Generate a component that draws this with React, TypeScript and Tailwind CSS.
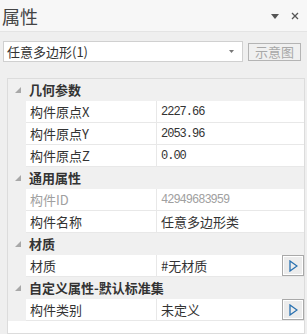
import React from "react";

const CJK = { fontFamily: '"Microsoft YaHei", "Noto Sans CJK SC", sans-serif' };
const MONO = { fontFamily: '"Liberation Mono", "Noto Sans CJK SC", monospace' };

type Row =
  | { kind: "cat"; label: string }
  | { kind: "prop"; name: string; value: string; mono?: boolean; disabled?: boolean; button?: boolean };

const ROWS: Row[] = [
  { kind: "cat", label: "几何参数" },
  { kind: "prop", name: "构件原点X", value: "2227.66", mono: true },
  { kind: "prop", name: "构件原点Y", value: "2053.96", mono: true },
  { kind: "prop", name: "构件原点Z", value: "0.00", mono: true },
  { kind: "cat", label: "通用属性" },
  { kind: "prop", name: "构件ID", value: "42949683959", mono: true, disabled: true },
  { kind: "prop", name: "构件名称", value: "任意多边形类" },
  { kind: "cat", label: "材质" },
  { kind: "prop", name: "材质", value: "#无材质", button: true },
  { kind: "cat", label: "自定义属性-默认标准集" },
  { kind: "prop", name: "构件类别", value: "未定义", button: true },
];

function ExpandGlyph() {
  return (
    <svg width="6" height="6" viewBox="0 0 6 6" className="shrink-0">
      <polygon points="6,0 6,6 0,6" fill="#a8a8a8" />
    </svg>
  );
}

function PickButton() {
  return (
    <div className="w-[22px] h-[21px] border border-[#a9a9a9] bg-white flex items-center justify-center shrink-0">
      <div className="w-[18px] h-[17px] bg-[#ececec] flex items-center justify-center">
        <svg width="9" height="12" viewBox="0 0 9 12">
          <polygon points="1,1 8,6 1,11" fill="none" stroke="#2870b0" strokeWidth="1.3" />
        </svg>
      </div>
    </div>
  );
}

function GridRow({ row }: { row: Row }) {
  if (row.kind === "cat") {
    return (
      <div className="h-[22px] flex items-center bg-[#f0f0f0] border-b border-[#f0f0f0]">
        <div className="w-[18px] flex justify-center pl-[2px]">
          <ExpandGlyph />
        </div>
        <span className="pl-[3px] text-[13px] font-bold text-[#333] whitespace-nowrap" style={CJK}>
          {row.label}
        </span>
      </div>
    );
  }
  return (
    <div className="h-[22px] flex bg-[#f0f0f0]">
      <div className="w-[18px] shrink-0" />
      <div className="flex flex-1 bg-white border-b border-[#e8e8e8]">
        <div
          className={`w-[131px] border-r border-[#e8e8e8] pl-[4px] flex items-center text-[13px] ${row.disabled ? "text-[#a0a0a0]" : "text-[#333]"}`}
          style={CJK}
        >
          {row.name}
        </div>
        <div className="flex-1 flex items-center pl-[4px] min-w-0">
          <span
            className={`flex-1 whitespace-nowrap ${row.mono ? "text-[12px] tracking-[-1px]" : "text-[13px]"} ${row.disabled ? "text-[#a0a0a0]" : "text-[#333]"}`}
            style={row.mono ? MONO : CJK}
          >
            {row.value}
          </span>
          {row.button && <PickButton />}
        </div>
      </div>
    </div>
  );
}

export default function App() {
  return (
    <div className="w-[307px] h-[334px] overflow-hidden bg-[#efefef] flex flex-col" style={CJK}>
      <div className="h-[32px] shrink-0 bg-[#f7f7f7] border-b border-[#e4e4e4] flex items-center pl-[2px] pr-[8px]">
        <span className="text-[18px] text-[#444] leading-none">属性</span>
        <div className="flex-1" />
        <svg width="8" height="5" viewBox="0 0 8 5" className="mr-[12px] mt-[2px]">
          <polygon points="0,0 8,0 4,5" fill="#555" />
        </svg>
        <svg width="8" height="8" viewBox="0 0 8 8">
          <path d="M1 1 L7 7 M7 1 L1 7" stroke="#555" strokeWidth="1.3" />
        </svg>
      </div>
      <div className="flex items-center pl-[3px] pr-[6px] pt-[9px] pb-[16px] shrink-0">
        <div className="w-[240px] h-[21px] bg-white border border-[#d0d0d0] flex items-center pl-[3px] pr-[8px]">
          <span className="flex-1 text-[13px] text-[#333]">任意多边形(1)</span>
          <svg width="5" height="3" viewBox="0 0 5 3">
            <polygon points="0,0 5,0 2.5,3" fill="#777" />
          </svg>
        </div>
        <div className="flex-1" />
        <div className="h-[18px] px-[6px] border border-[#b4b4b4] bg-[#f0f0f0] flex items-center text-[13px] text-[#a8a8a8]">
          示意图
        </div>
      </div>
      <div className="flex-1 ml-[7px] mr-[2px] border border-[#dcdcdc] bg-white">
        {ROWS.map((row, i) => (
          <GridRow key={i} row={row} />
        ))}
      </div>
    </div>
  );
}
